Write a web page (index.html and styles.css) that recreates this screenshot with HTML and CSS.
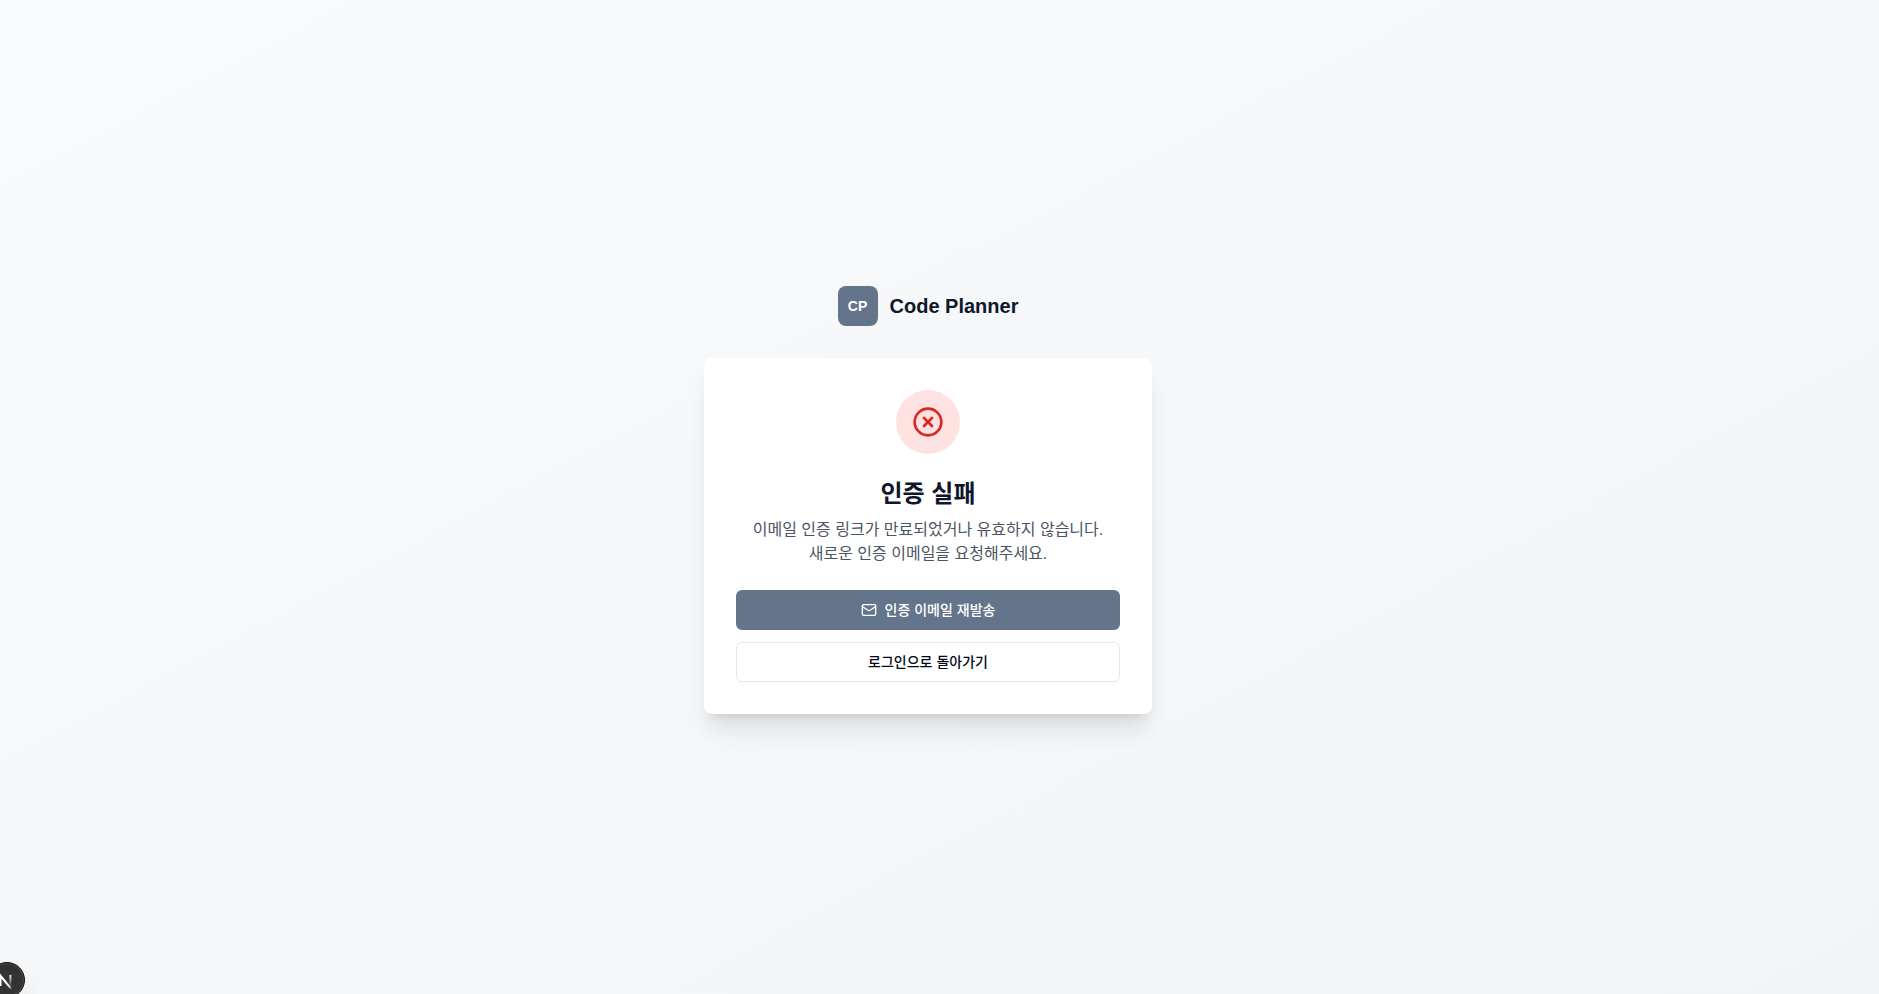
FILE: index.html
```
<!DOCTYPE html>
<html lang="ko">
<head>
<meta charset="utf-8">
<meta name="viewport" content="width=device-width, initial-scale=1">
<title>Code Planner</title>
<link rel="stylesheet" href="styles.css">
</head>
<body>
<main class="page">
  <div class="auth">
    <header class="brand">
      <span class="brand-mark">CP</span>
      <span class="brand-name">Code Planner</span>
    </header>
    <section class="card">
      <div class="status">
        <svg class="status-icon" viewBox="0 0 24 24" aria-hidden="true">
          <circle cx="12" cy="12" r="10"/>
          <path d="m15 9-6 6"/>
          <path d="m9 9 6 6"/>
        </svg>
      </div>
      <h1 class="title">인증 실패</h1>
      <p class="message">이메일 인증 링크가 만료되었거나 유효하지 않습니다.<br>새로운 인증 이메일을 요청해주세요.</p>
      <div class="actions">
        <button class="button button-primary" type="button">
          <svg class="button-icon" viewBox="0 0 24 24" aria-hidden="true">
            <rect x="2" y="4" width="20" height="16" rx="2"/>
            <path d="m22 7-8.97 5.7a1.94 1.94 0 0 1-2.06 0L2 7"/>
          </svg>
          인증 이메일 재발송
        </button>
        <button class="button button-outline" type="button">로그인으로 돌아가기</button>
      </div>
    </section>
  </div>
</main>
<button class="dev-badge" type="button" aria-label="Open Next.js Dev Tools">
  <svg class="dev-icon" viewBox="0 0 40 40" fill="none" aria-hidden="true">
    <defs>
      <linearGradient id="diagonal" x1="19" y1="22" x2="26" y2="31" gradientUnits="userSpaceOnUse">
        <stop stop-color="#fff"/>
        <stop offset="0.6" stop-color="#fff" stop-opacity="0.8"/>
        <stop offset="1" stop-color="#fff" stop-opacity="0"/>
      </linearGradient>
      <linearGradient id="stem" x1="24" y1="13" x2="24" y2="28" gradientUnits="userSpaceOnUse">
        <stop stop-color="#fff"/>
        <stop offset="1" stop-color="#fff" stop-opacity="0"/>
      </linearGradient>
    </defs>
    <path d="M12.3 27V15L25 30.5" stroke="url(#diagonal)" stroke-width="2.5"/>
    <path d="M24 14V27" stroke="url(#stem)" stroke-width="2.3"/>
  </svg>
</button>
</body>
</html>
```
FILE: styles.css
```
*,
*::before,
*::after {
  box-sizing: border-box;
}

body {
  margin: 0;
  overflow: hidden;
  color: #0f172a;
  font-family: "Liberation Sans", "Noto Sans CJK KR", sans-serif;
  font-size: 16px;
  line-height: 24px;
}

.page {
  display: flex;
  align-items: center;
  justify-content: center;
  min-height: 100vh;
  padding: 6px 23px 0 0;
  background: linear-gradient(to bottom right, #f8fafc, #f3f4f6);
}

.auth {
  width: 100%;
  max-width: 448px;
}

.brand {
  display: flex;
  align-items: center;
  justify-content: center;
  gap: 12px;
  margin-bottom: 32px;
}

.brand-mark {
  display: flex;
  align-items: center;
  justify-content: center;
  width: 40px;
  height: 40px;
  border-radius: 8px;
  background: #64748b;
  color: #fff;
  font-size: 14px;
  font-weight: 700;
}

.brand-name {
  font-size: 20px;
  font-weight: 700;
  line-height: 28px;
}

.card {
  padding: 32px;
  border-radius: 8px;
  background: #fff;
  box-shadow: 0 20px 25px -5px rgb(0 0 0 / 0.1), 0 8px 10px -6px rgb(0 0 0 / 0.1);
  text-align: center;
}

.status {
  display: flex;
  align-items: center;
  justify-content: center;
  width: 64px;
  height: 64px;
  margin: 0 auto 24px;
  border-radius: 50%;
  background: #fee2e2;
}

.status-icon,
.button-icon {
  fill: none;
  stroke: currentColor;
  stroke-width: 2;
  stroke-linecap: round;
  stroke-linejoin: round;
}

.status-icon {
  width: 32px;
  height: 32px;
  color: #dc2626;
}

.title {
  margin: 0 0 8px;
  font-size: 24px;
  font-weight: 700;
  line-height: 32px;
}

.message {
  margin: 0 0 24px;
  color: #4b5563;
}

.actions {
  display: flex;
  flex-direction: column;
  gap: 12px;
}

.button {
  display: flex;
  align-items: center;
  justify-content: center;
  gap: 8px;
  width: 100%;
  height: 40px;
  padding: 8px 16px;
  border: 0;
  border-radius: 6px;
  font-family: inherit;
  font-size: 14px;
  font-weight: 500;
  line-height: 20px;
  cursor: pointer;
}

.button-primary {
  background: #64748b;
  color: #fff;
}

.button-outline {
  border: 1px solid #e5e5e5;
  background: #fff;
  color: #020817;
}

.button-icon {
  width: 16px;
  height: 16px;
}

.dev-badge {
  position: fixed;
  bottom: -4px;
  left: -11px;
  width: 36px;
  height: 36px;
  padding: 0;
  border: 1px solid #111;
  border-radius: 50%;
  background: #333;
  box-shadow: inset 0 0 0 1px #4a4a4a, 0 16px 32px -8px rgb(0 0 0 / 0.24);
}

.dev-icon {
  display: block;
  width: 100%;
  height: 100%;
}
```
